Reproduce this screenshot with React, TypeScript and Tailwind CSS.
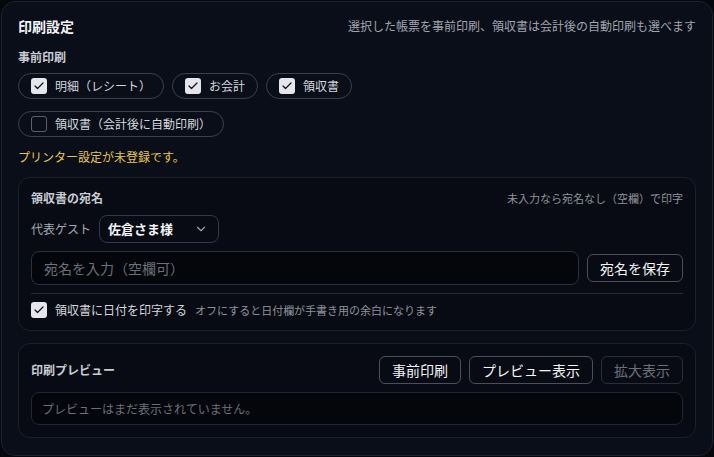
import React, { useState } from 'react';
import { Check, ChevronDown } from 'lucide-react';

const font = { fontFamily: '"Noto Sans CJK JP", "Noto Sans", sans-serif' };

const Box: React.FC<{ checked: boolean }> = ({ checked }) =>
  checked ? (
    <span className="flex h-4 w-4 shrink-0 items-center justify-center rounded-[3px] bg-[#e4e6eb]">
      <Check className="h-3 w-3 text-[#111318]" strokeWidth={2.5} />
    </span>
  ) : (
    <span className="h-4 w-4 shrink-0 rounded-[3px] border border-[#5b606b]" />
  );

const Chip: React.FC<{ label: string; checked: boolean; onToggle: () => void }> = ({ label, checked, onToggle }) => (
  <button
    type="button"
    onClick={onToggle}
    className="flex items-center gap-2 rounded-full border border-[#3a3f4a] px-3 py-1 text-xs leading-4 text-[#d4d7dd]"
  >
    <Box checked={checked} />
    <span>{label}</span>
  </button>
);

export default function App() {
  const [pre, setPre] = useState({ receipt: true, bill: true, ryoshu: true, auto: false });
  const [printDate, setPrintDate] = useState(true);
  const [name, setName] = useState('');

  return (
    <div className="h-[457px] w-[714px] bg-[#05070c] p-px" style={font}>
      <div className="flex h-full w-full flex-col rounded-[14px] border border-[#1d2130] bg-[#0a0e19] p-4">
        {/* ヘッダー */}
        <div className="flex h-4 items-center justify-between">
          <h2 className="text-sm font-bold leading-4 text-[#f3f4f6]">印刷設定</h2>
          <span className="text-xs text-[#a0a5ae]">選択した帳票を事前印刷、領収書は会計後の自動印刷も選べます</span>
        </div>

        <div className="mt-[15px] text-xs font-semibold leading-4 text-[#c9ccd3]">事前印刷</div>
        <div className="mt-2 flex gap-2">
          <Chip label="明細（レシート）" checked={pre.receipt} onToggle={() => setPre({ ...pre, receipt: !pre.receipt })} />
          <Chip label="お会計" checked={pre.bill} onToggle={() => setPre({ ...pre, bill: !pre.bill })} />
          <Chip label="領収書" checked={pre.ryoshu} onToggle={() => setPre({ ...pre, ryoshu: !pre.ryoshu })} />
        </div>
        <div className="mt-3 flex">
          <Chip label="領収書（会計後に自動印刷）" checked={pre.auto} onToggle={() => setPre({ ...pre, auto: !pre.auto })} />
        </div>

        <p className="mt-3 text-xs leading-4 text-[#e8c64c]">プリンター設定が未登録です。</p>

        {/* 宛名 */}
        <div className="mt-3 rounded-xl border border-[#1c202b] bg-[#080b13] px-3 pb-3 pt-3">
          <div className="flex items-center justify-between">
            <span className="text-xs font-semibold leading-4 text-[#c9ccd3]">領収書の宛名</span>
            <span className="text-[11px] text-[#8e939c]">未入力なら宛名なし（空欄）で印字</span>
          </div>
          <div className="mt-2 flex items-center gap-2">
            <span className="text-xs text-[#a6abb3]">代表ゲスト</span>
            <button
              type="button"
              className="flex h-7 w-[120px] items-center justify-between rounded-lg border border-[#33384a] px-2 text-[13px] font-bold text-[#f3f4f6]"
            >
              <span>佐倉さま様</span>
              <ChevronDown className="mr-0.5 h-3.5 w-3.5 text-[#9ca1aa]" />
            </button>
          </div>
          <div className="mt-2 flex items-center gap-2">
            <input
              value={name}
              onChange={(e) => setName(e.target.value)}
              placeholder="宛名を入力（空欄可）"
              className="h-[34px] flex-1 rounded-lg border border-[#2c3140] bg-[#04060b] px-3 text-sm text-[#e5e7eb] outline-none placeholder:text-[#6b7079]"
            />
            <button
              type="button"
              className="h-7 rounded-md border border-[#4a4f5a] px-3 text-sm text-[#f3f4f6]"
            >
              宛名を保存
            </button>
          </div>
          <div className="mt-2 flex items-center gap-2 border-t border-[#262a35] pt-2">
            <button type="button" onClick={() => setPrintDate(!printDate)}>
              <Box checked={printDate} />
            </button>
            <span className="text-xs leading-4 text-[#d4d7dd]">領収書に日付を印字する</span>
            <span className="text-[11px] text-[#8e939c]">オフにすると日付欄が手書き用の余白になります</span>
          </div>
        </div>

        {/* プレビュー */}
        <div className="mt-3 rounded-xl border border-[#1c202b] bg-[#080b13] p-3">
          <div className="flex items-center justify-between">
            <span className="text-xs font-semibold leading-4 text-[#c9ccd3]">印刷プレビュー</span>
            <div className="flex gap-2">
              <button type="button" className="h-7 rounded-md border border-[#4a4f5a] px-3 text-sm text-[#f3f4f6]">
                事前印刷
              </button>
              <button type="button" className="h-7 rounded-md border border-[#4a4f5a] px-3 text-sm text-[#f3f4f6]">
                プレビュー表示
              </button>
              <button type="button" disabled className="h-7 rounded-md border border-[#2a2e39] px-3 text-sm text-[#6b7079]">
                拡大表示
              </button>
            </div>
          </div>
          <div className="mt-2 flex h-[33px] items-center rounded-lg border border-[#22262f] bg-[#04060b] px-2.5 text-xs text-[#6b7079]">
            プレビューはまだ表示されていません。
          </div>
        </div>
      </div>
    </div>
  );
}
